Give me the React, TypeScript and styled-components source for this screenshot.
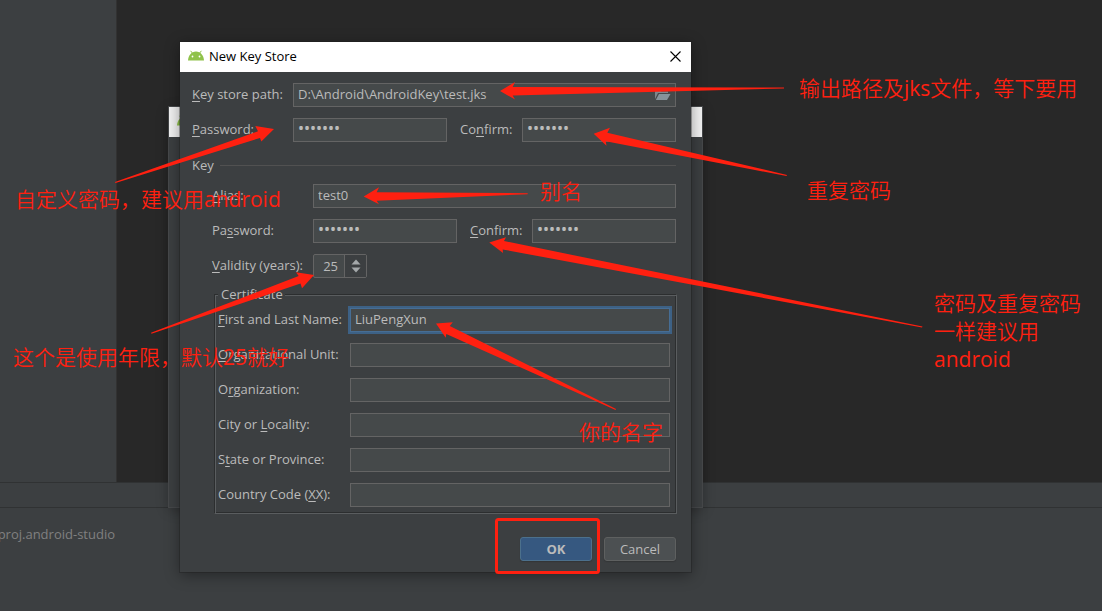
import React from "react";
import styled, { createGlobalStyle } from "styled-components";

const GlobalStyle = createGlobalStyle`
  *, *::before, *::after { box-sizing: border-box; }
  body {
    margin: 0;
    background: #3c3f41;
    color: #bbbbbb;
    font: 13px/16px "Open Sans", "Noto Sans CJK SC", sans-serif;
  }
  input, button { font: inherit; color: inherit; margin: 0; }
`;

const Desktop = styled.main`
  position: relative;
  display: flex;
  flex-direction: column;
  min-height: 100vh;
  overflow: hidden;
`;

const Workspace = styled.div`
  display: flex;
  flex: 1;
`;

const SidePanel = styled.aside`
  width: 117px;
  border-right: 1px solid #323232;
`;

const Editor = styled.section`
  flex: 1;
  background: #282828;
`;

const ToolStrip = styled.div`
  height: 26px;
  border-top: 1px solid #303233;
  border-bottom: 1px solid #303233;
`;

const Console = styled.footer`
  height: 103px;
  padding: 18px 0;
  color: #808080;
`;

const ConsolePath = styled.div`
  display: flex;
  justify-content: flex-end;
  width: 115px;
  white-space: nowrap;
`;

const WindowFrame = styled.section<{ $x: number; $y: number; $w: number }>`
  position: absolute;
  left: ${(p) => p.$x}px;
  top: ${(p) => p.$y}px;
  width: ${(p) => p.$w}px;
  background: #3c3f41;
  box-shadow: 0 0 0 1px rgba(30, 30, 30, 0.35), 0 3px 14px rgba(0, 0, 0, 0.4);
`;

const BackWindow = styled(WindowFrame)`
  height: 400px;
  box-shadow: 0 0 0 1px #46484a, 0 3px 12px rgba(0, 0, 0, 0.3);
`;

const TitleBar = styled.header<{ $inactive?: boolean }>`
  display: flex;
  align-items: center;
  gap: 5px;
  height: 30px;
  padding: 0 8px 2px;
  background: ${(p) => (p.$inactive ? "#f2f2f2" : "#ffffff")};
  color: #000000;
`;

const Title = styled.h1`
  flex: 1;
  margin: 0;
  font-size: 13px;
  font-weight: 400;
`;

const CloseButton = styled.button`
  display: flex;
  padding: 2px;
  border: 0;
  background: none;
`;

const Form = styled.form`
  display: flex;
  flex-direction: column;
  gap: 11px;
  padding: 11px 15px 11px 12px;
`;

const Row = styled.div<{ $indent?: boolean }>`
  display: flex;
  align-items: center;
  height: 24px;
  margin-left: ${(p) => (p.$indent ? 20 : 0)}px;
`;

const Label = styled.label<{ $w: number }>`
  flex: 0 0 ${(p) => p.$w}px;
  padding-bottom: 2px;
  white-space: nowrap;

  u { text-underline-offset: 2px; }
`;

const ConfirmLabel = styled(Label)`
  margin-left: 13px;
`;

const TextInput = styled.input`
  flex: 1;
  min-width: 0;
  height: 24px;
  padding: 0 4px 2px;
  border: 1px solid #646464;
  border-radius: 0;
  background: #45494a;
  outline: none;

  &[type="password"] {
    padding-bottom: 4px;
    font-family: "Noto Sans", sans-serif;
    font-size: 16px;
  }
`;

const NameInput = styled(TextInput)`
  border-color: #466d94;
  box-shadow: 0 0 0 2px #3d6185;
`;

const PathField = styled.div`
  display: flex;
  align-items: center;
  flex: 1;
  height: 24px;
  padding-right: 4px;
  border: 1px solid #646464;
  background: #45494a;

  input { height: 22px; border: 0; background: none; }
`;

const IconButton = styled.button`
  display: flex;
  padding: 0;
  border: 0;
  background: none;
`;

const SectionRow = styled(Row)`
  gap: 6px;
  margin-bottom: -4px;

  &::after {
    content: "";
    flex: 1;
    border-top: 1px solid #515151;
  }
`;

const Spinner = styled.div`
  display: flex;
  width: 54px;
  height: 24px;
  border: 1px solid #646464;
  border-radius: 2px;
  background: #45494a;

  input {
    width: 31px;
    padding: 0 6px 0 0;
    border: 0;
    border-right: 1px solid #646464;
    background: none;
    text-align: right;
    outline: none;
  }
`;

const SpinnerButtons = styled.div`
  display: flex;
  flex: 1;
  flex-direction: column;
  align-items: center;
  justify-content: center;
  gap: 2px;
  background: #3c3f41;
`;

const Certificate = styled.fieldset`
  display: flex;
  flex-direction: column;
  gap: 11px;
  min-width: 0;
  margin: -3px -1px 0 22px;
  padding: 6px 6px 6px 3px;
  border: 1px solid;
  border-color: #2c2e2f #5a5d5f #5a5d5f #2c2e2f;
  box-shadow: inset 1px 1px #5a5d5f, inset -1px -1px #2c2e2f;
`;

const Legend = styled.legend`
  padding: 0 2px 0 3px;
  background: #3c3f41;
`;

const Actions = styled.div`
  display: flex;
  justify-content: flex-end;
  gap: 12px;
  margin-top: 12px;
`;

const ActionButton = styled.button<{ $primary?: boolean }>`
  width: 72px;
  height: 24px;
  padding: 0;
  border: 1px solid ${(p) => (p.$primary ? "#4c708c" : "#5e6060")};
  border-radius: 3px;
  background: ${(p) => (p.$primary ? "#365880" : "#4c5052")};
  font-weight: ${(p) => (p.$primary ? 700 : 400)};
  box-shadow: 0 1px 1px rgba(40, 40, 40, 0.4);
`;

const Markup = styled.svg`
  position: absolute;
  left: 0;
  top: 0;
  pointer-events: none;
`;

const Note = styled.p<{ $x: number; $y: number }>`
  position: absolute;
  left: ${(p) => p.$x}px;
  top: ${(p) => p.$y}px;
  margin: 0;
  color: #ff2010;
  font: 350 21px/28px "Open Sans", "Noto Sans CJK SC", sans-serif;
  white-space: pre;
  pointer-events: none;
`;

const Latin = styled.span`
  font-weight: 400;
`;

const AndroidIcon = () => (
  <svg width="16" height="12" viewBox="0 0 16 12" aria-hidden="true">
    <path d="M2.600.8 4.800 3.6M13.400.8 11.200 3.6" stroke="#8fc24a" strokeWidth="1" fill="none" />
    <path d="M0 10.5C.2 5.6 3.4 1.500 8 1.500s7.800 4.100 8 9Z" fill="#8fc24a" />
    <circle cx="4.500" cy="6.500" r=".9" fill="#fff" />
    <circle cx="11.500" cy="6.500" r=".9" fill="#fff" />
  </svg>
);

const CloseIcon = () => (
  <svg width="11" height="11" viewBox="0 0 11 11" aria-hidden="true">
    <path d="M.5.5 10.500 10.500M10.500.5.5 10.500" stroke="#000" strokeWidth="1.100" />
  </svg>
);

const FolderIcon = () => (
  <svg width="16" height="12" viewBox="0 0 16 12" aria-hidden="true">
    <path d="M0 10V1h5l1.500 1.500H13V4H3Z" fill="#7d868c" />
    <path d="M4 5h11.500L12 11H.8Z" fill="#87939a" />
  </svg>
);

const Arrow = ({ down }: { down?: boolean }) => (
  <svg width="10" height="6" viewBox="0 0 10 6" aria-hidden="true">
    <path d={down ? "M.5.5h9L5 5.500Z" : "M.5 5.500h9L5 .5Z"} fill="#a4a8aa" />
  </svg>
);

const arrows = [
  "500,91 515,82 512.7,87 784,87.5 784,88.5 512.7,95.5 515,99.5",
  "274,129 255.3,126 258,131.3 115,182 115.5,183 260,138 261.3,141.5",
  "593.7,133.7 610,127.700 607.3,132.700 787,175 786.5,176 605.7,141.3 606.5,145.700",
  "363.7,196.600 379,187.300 376.7,192.300 527.7,193.200 527.7,194.200 376.7,200.700 379,204.300",
  "489.3,242.600 506,237.300 504,241 922.5,326.500 922,327.500 502.7,249.500 503,253",
  "314,275 296,272.200 298.7,276 151,332.700 151.5,333.700 300.5,283.500 302,288.300",
  "436,323.600 452.8,322.300 449.8,326 616,409 615.5,410 446.3,334 445.7,337.800",
];

const certificateRows = [
  { id: "unit", label: <><u>O</u>rganizational Unit:</> },
  { id: "org", label: <>O<u>r</u>ganization:</> },
  { id: "city", label: <>City or <u>L</u>ocality:</> },
  { id: "state", label: <>S<u>t</u>ate or Province:</> },
  { id: "country", label: <>Country Code (<u>X</u>X):</> },
];

export default function App() {
  return (
    <Desktop>
      <GlobalStyle />
      <Workspace>
        <SidePanel />
        <Editor />
      </Workspace>
      <ToolStrip />
      <Console>
        <ConsolePath>\proj.android-studio</ConsolePath>
      </Console>

      <BackWindow $x={169} $y={107} $w={533}>
        <TitleBar $inactive>
          <AndroidIcon />
        </TitleBar>
      </BackWindow>

      <WindowFrame $x={180} $y={42} $w={511}>
        <TitleBar>
          <AndroidIcon />
          <Title>New Key Store</Title>
          <CloseButton type="button" aria-label="Close">
            <CloseIcon />
          </CloseButton>
        </TitleBar>
        <Form onSubmit={(e) => e.preventDefault()}>
          <Row>
            <Label $w={101} htmlFor="path"><u>K</u>ey store path:</Label>
            <PathField>
              <TextInput id="path" defaultValue="D:\Android\AndroidKey\test.jks" />
              <IconButton type="button" aria-label="Browse">
                <FolderIcon />
              </IconButton>
            </PathField>
          </Row>
          <Row>
            <Label $w={101} htmlFor="storePass"><u>P</u>assword:</Label>
            <TextInput id="storePass" type="password" defaultValue="android" />
            <ConfirmLabel $w={62} htmlFor="storeConfirm">Co<u>n</u>firm:</ConfirmLabel>
            <TextInput id="storeConfirm" type="password" defaultValue="android" />
          </Row>
          <SectionRow>Key</SectionRow>
          <Row $indent>
            <Label $w={101} htmlFor="alias"><u>A</u>lias:</Label>
            <TextInput id="alias" defaultValue="test0" />
          </Row>
          <Row $indent>
            <Label $w={101} htmlFor="keyPass">Pa<u>s</u>sword:</Label>
            <TextInput id="keyPass" type="password" defaultValue="android" />
            <ConfirmLabel $w={62} htmlFor="keyConfirm"><u>C</u>onfirm:</ConfirmLabel>
            <TextInput id="keyConfirm" type="password" defaultValue="android" />
          </Row>
          <Row $indent>
            <Label $w={101} htmlFor="validity"><u>V</u>alidity (years):</Label>
            <Spinner>
              <input id="validity" inputMode="numeric" defaultValue="25" />
              <SpinnerButtons>
                <IconButton type="button" aria-label="Increase"><Arrow /></IconButton>
                <IconButton type="button" aria-label="Decrease"><Arrow down /></IconButton>
              </SpinnerButtons>
            </Spinner>
          </Row>
          <Certificate>
            <Legend>Certificate</Legend>
            <Row>
              <Label $w={132} htmlFor="fullName"><u>F</u>irst and Last Name:</Label>
              <NameInput id="fullName" defaultValue="LiuPengXun" />
            </Row>
            {certificateRows.map((row) => (
              <Row key={row.id}>
                <Label $w={132} htmlFor={row.id}>{row.label}</Label>
                <TextInput id={row.id} />
              </Row>
            ))}
          </Certificate>
          <Actions>
            <ActionButton type="submit" $primary>OK</ActionButton>
            <ActionButton type="button">Cancel</ActionButton>
          </Actions>
        </Form>
      </WindowFrame>

      <Markup width="1102" height="611" viewBox="0 0 1102 611" aria-hidden="true">
        {arrows.map((points) => (
          <polygon key={points} points={points} fill="#ff2010" />
        ))}
        <rect x="496.500" y="519.500" width="102" height="53" rx="2" fill="none" stroke="#ff2010" strokeWidth="3" />
      </Markup>
      <Note $x={799} $y={74}>输出路径及<Latin>jks</Latin>文件，等下要用</Note>
      <Note $x={807} $y={176}>重复密码</Note>
      <Note $x={15} $y={185}>自定义密码，建议用<Latin>android</Latin></Note>
      <Note $x={540} $y={177}>别名</Note>
      <Note $x={934} $y={289}>密码及重复密码<br />一样建议用<br /><Latin>android</Latin></Note>
      <Note $x={13} $y={343}>这个是使用年限，默认<Latin>25</Latin>就好</Note>
      <Note $x={579} $y={418}>你的名字</Note>
    </Desktop>
  );
}
